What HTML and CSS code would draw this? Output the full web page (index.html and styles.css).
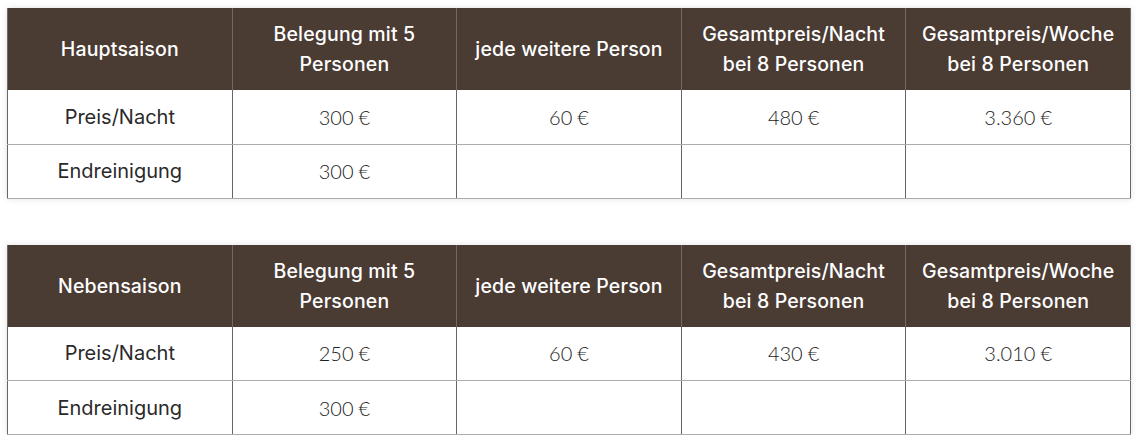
FILE: index.html
```html
<!DOCTYPE html>
<html lang="de">
<head>
<meta charset="utf-8">
<link rel="stylesheet" href="styles.css">
</head>
<body>
<div class="page">
  <table class="prices">
    <thead>
      <tr>
        <th>Hauptsaison</th>
        <th>Belegung mit 5<br>Personen</th>
        <th>jede weitere Person</th>
        <th>Gesamtpreis/Nacht<br>bei 8 Personen</th>
        <th>Gesamtpreis/Woche<br>bei 8 Personen</th>
      </tr>
    </thead>
    <tbody>
      <tr>
        <td class="label">Preis/Nacht</td>
        <td class="num">300&#8239;€</td>
        <td class="num">60&#8239;€</td>
        <td class="num">480&#8239;€</td>
        <td class="num">3.360&#8239;€</td>
      </tr>
      <tr>
        <td class="label">Endreinigung</td>
        <td class="num">300&#8239;€</td>
        <td></td>
        <td></td>
        <td></td>
      </tr>
    </tbody>
  </table>
  <table class="prices">
    <thead>
      <tr>
        <th>Nebensaison</th>
        <th>Belegung mit 5<br>Personen</th>
        <th>jede weitere Person</th>
        <th>Gesamtpreis/Nacht<br>bei 8 Personen</th>
        <th>Gesamtpreis/Woche<br>bei 8 Personen</th>
      </tr>
    </thead>
    <tbody>
      <tr>
        <td class="label">Preis/Nacht</td>
        <td class="num">250&#8239;€</td>
        <td class="num">60&#8239;€</td>
        <td class="num">430&#8239;€</td>
        <td class="num">3.010&#8239;€</td>
      </tr>
      <tr>
        <td class="label">Endreinigung</td>
        <td class="num">300&#8239;€</td>
        <td></td>
        <td></td>
        <td></td>
      </tr>
    </tbody>
  </table>
</div>
</body>
</html>
```
FILE: styles.css
```css
html, body {
  margin: 0;
  padding: 0;
  background: #ffffff;
}
.page {
  padding: 8px 10px 0 7px;
  display: flex;
  flex-direction: column;
  gap: 46px;
}
.prices {
  width: 1124px;
  border-collapse: collapse;
  table-layout: fixed;
  box-shadow: 0 0 6px rgba(0, 0, 0, 0.12);
  font-family: Inter, "Liberation Sans", sans-serif;
}
.prices th {
  background: #4a3b33;
  color: #ffffff;
  font-weight: 500;
  font-size: 19.5px;
  letter-spacing: 0.15px;
  line-height: 30px;
  height: 82px;
  padding: 0 6px;
  text-align: center;
  vertical-align: middle;
  border-left: 1px solid #6b6b6b;
  border-right: 1px solid #6b6b6b;
  box-sizing: border-box;
}
.prices td {
  height: 54px;
  padding: 0 8px;
  text-align: center;
  vertical-align: middle;
  background: #ffffff;
  border-left: 1px solid #666666;
  border-right: 1px solid #666666;
  border-bottom: 1px solid #ababab;
  box-sizing: border-box;
}
.prices td.label {
  font-size: 20px;
  color: #2a2a2a;
}
.prices td.num {
  font-family: Lato, "Open Sans", sans-serif;
  font-weight: 300;
  font-size: 20px;
  color: #1c1c1c;
}
```
